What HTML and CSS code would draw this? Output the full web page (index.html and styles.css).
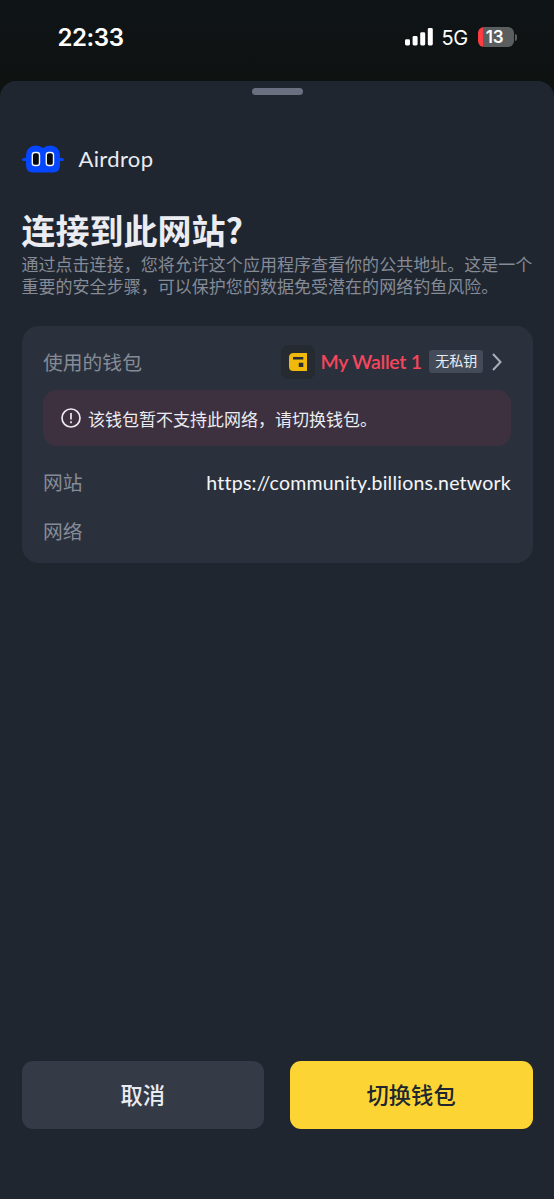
FILE: index.html
```
<!DOCTYPE html>
<html lang="zh-CN">
<head>
<meta charset="utf-8">
<title>连接到此网站?</title>
<link rel="stylesheet" href="styles.css">
</head>
<body>
<div class="status">
  <span class="time">22:33</span>
  <div class="indicators">
    <svg class="signal" width="28" height="18" viewBox="0 0 28 18" fill="#fff"><rect x="0" y="11.3" width="5" height="6.2" rx="1.4"/><rect x="7.6" y="8" width="5" height="9.5" rx="1.4"/><rect x="15.2" y="4.3" width="5" height="13.2" rx="1.4"/><rect x="22.8" y="0" width="5" height="17.5" rx="1.4"/></svg>
    <span class="net">5G</span>
    <div class="battery"><span>13</span></div>
    <i class="battery-tip"></i>
  </div>
</div>
<main class="sheet">
  <div class="grabber"></div>
  <header class="app">
    <svg width="42" height="28" viewBox="0 0 42 28"><path d="M0 14.5Q0 13 2 13H4V10Q4.500 1 14 .5Q18 .5 21 3Q24 .5 28 .5Q37.500 1 38 10V13H40Q42 13 42 14.500Q42 16 40 16H38V20Q38 27.500 31 27.500H11Q4 27.500 4 20V16H2Q0 16 0 14.500Z" fill="#0546ff"/><g fill="#08090d" stroke="#f2f5ff" stroke-width="1.400"><rect x="10.300" y="7.500" width="7.200" height="13" rx="2.600"/><rect x="24.300" y="7.500" width="7.200" height="13" rx="2.600"/></g></svg>
    <span class="app-name">Airdrop</span>
  </header>
  <h1 class="title">连接到此网站?</h1>
  <p class="desc">通过点击连接，您将允许这个应用程序查看你的公共地址。这是一个<br>重要的安全步骤，可以保护您的数据免受潜在的网络钓鱼风险。</p>
  <section class="card">
    <div class="row wallet-row">
      <span class="label">使用的钱包</span>
      <div class="wallet">
        <span class="wallet-icon"><svg width="18" height="18" viewBox="0 0 18 18"><path d="M4.500 0H18V18H4.500Q0 18 0 13.500V4.500Q0 0 4.500 0Z" fill="#f0b90b"/><path d="M4 4h10.300v2.400H4zM9.800 9.800h4.500v4.200H9.800z" fill="#262b31"/></svg></span>
        <span class="wallet-name">My Wallet 1</span>
        <span class="tag">无私钥</span>
        <svg class="chevron" width="10" height="18" viewBox="0 0 10 18" fill="none" stroke="#a8afbb" stroke-width="2"><path d="M1 1l7.500 8L1 17"/></svg>
      </div>
    </div>
    <div class="alert">
      <svg width="20" height="20" viewBox="0 0 20 20" fill="none" stroke="#eceaf0" stroke-width="1.700"><circle cx="10" cy="10" r="9"/><path d="M10 5v6.400M10 13.200v2"/></svg>
      <span>该钱包暂不支持此网络，请切换钱包。</span>
    </div>
    <div class="row site-row"><span class="label">网站</span><span class="url">https://community.billions.network</span></div>
    <div class="row net-row"><span class="label">网络</span></div>
  </section>
  <footer class="actions">
    <button class="btn cancel">取消</button>
    <button class="btn primary">切换钱包</button>
  </footer>
</main>
</body>
</html>
```
FILE: styles.css
```
* { box-sizing: border-box; }
body { margin: 0; height: 1199px; display: flex; flex-direction: column; background: linear-gradient(#0f1417, #0e1211 80px, #0e1211); color: #eaecf2; font-family: Lato, "Noto Sans CJK SC", sans-serif; overflow: hidden; }
.status { height: 81px; flex: none; display: flex; justify-content: space-between; align-items: flex-start; padding: 22px 37.500px 0 57.500px; font-family: Inter, sans-serif; color: #fff; }
.time { font-size: 24px; line-height: 31px; font-weight: 600; letter-spacing: -.4px; }
.indicators { display: flex; align-items: center; height: 30px; }
.net { font-size: 20px; line-height: 24px; padding-top: 1px; margin-left: 9px; width: 27px; letter-spacing: -.3px; font-weight: 400; }
.battery { width: 36px; height: 20px; margin-left: 9px; border-radius: 6px; background: linear-gradient(90deg, #ff3b42 5px, #5b5e5f 5px); display: flex; align-items: center; justify-content: center; font-size: 17px; font-weight: 600; letter-spacing: -.3px; }
.battery span { margin-left: -2px; }
.battery-tip { width: 2px; height: 7px; margin-left: 1px; border-radius: 0 2px 2px 0; background: #5b5e5f; }
.sheet { flex: 1; display: flex; flex-direction: column; padding: 7px 21.500px 70px; background: #202630; border-radius: 16px 16px 0 0; }
.grabber { width: 51px; height: 7px; border-radius: 4px; background: #6b7080; align-self: center; }
.app { display: flex; align-items: center; gap: 15px; height: 28px; margin-top: 50px; }
.app-name { font-size: 22px; line-height: 28px; letter-spacing: .35px; }
.title { margin: 34px 0 0; font-family: "Noto Sans CJK SC", sans-serif; font-size: 34px; line-height: 46px; font-weight: 700; white-space: nowrap; }
.desc { margin: 2px 0 0; height: 43px; font-family: "Liberation Sans", "Noto Sans CJK SC", sans-serif; font-size: 17px; line-height: 21.500px; letter-spacing: .03px; color: #858b97; white-space: nowrap; }
.card { margin-top: 28px; height: 237px; flex: none; border-radius: 17px; background: #2b313c; padding: 18.500px 21.500px 0; }
.row { display: flex; align-items: center; justify-content: space-between; height: 34px; }
.label { font-size: 19.800px; line-height: 30px; color: #858b97; }
.wallet { display: flex; align-items: center; }
.wallet-icon { width: 34px; height: 34px; border-radius: 7px; background: #262b31; display: flex; align-items: center; justify-content: center; }
.wallet-name { margin-left: 6px; font-size: 19.500px; letter-spacing: -.3px; color: #f6465d; font-weight: 600; }
.tag { margin-left: 7.500px; width: 54px; height: 23px; border-radius: 3px; background: #434b59; font-size: 14px; line-height: 22px; text-align: center; }
.chevron { margin: 0 8.800px 0 9px; }
.alert { height: 56px; margin-top: 11.500px; border-radius: 14px; background: #3e313f; display: flex; align-items: center; gap: 7px; padding-left: 18px; font-size: 17px; font-family: "Noto Sans CJK SC", sans-serif; }
.site-row { margin-top: 19px; }
.net-row { margin-top: 15px; }
.url { font-size: 19.500px; letter-spacing: .23px; color: #f5f6fa; white-space: nowrap; }
.actions { display: grid; grid-template-columns: 1fr 1fr; gap: 25.500px; margin-top: auto; }
.btn { height: 68px; border: 0; border-radius: 11px; padding: 0 0 2px; font: 500 22.300px/30px "Noto Sans CJK SC", sans-serif; }
.cancel { background: #343a46; color: #eaecf2; }
.primary { background: #fcd535; color: #202630; }
```
